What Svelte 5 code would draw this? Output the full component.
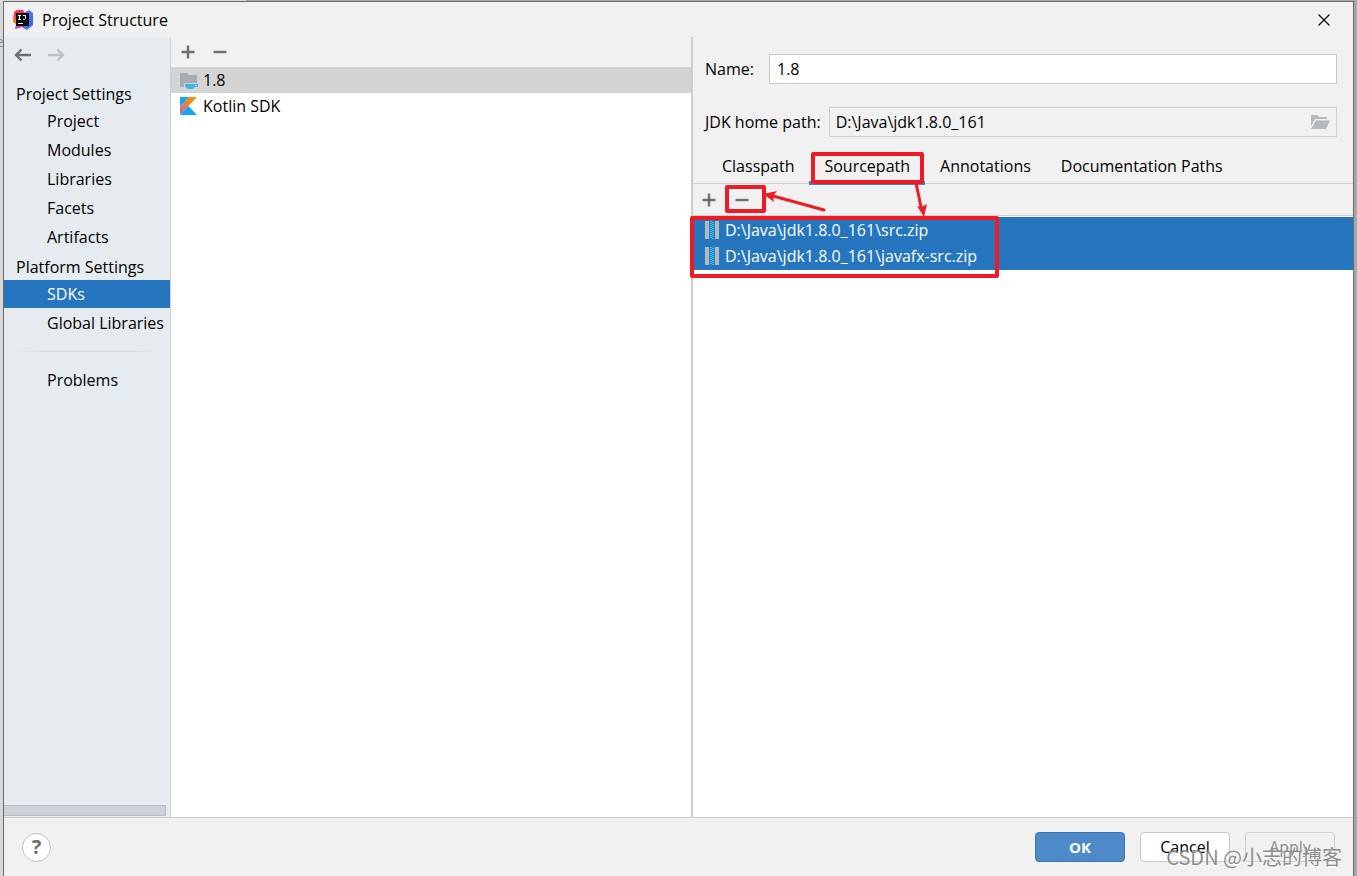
<script>
  const projectItems = ['Project', 'Modules', 'Libraries', 'Facets', 'Artifacts'];
  const platformItems = ['SDKs', 'Global Libraries'];
  const tabs = ['Classpath', 'Sourcepath', 'Annotations', 'Documentation Paths'];
  const sources = ['D:\\Java\\jdk1.8.0_161\\src.zip', 'D:\\Java\\jdk1.8.0_161\\javafx-src.zip'];
  const toothRows = [0, 1, 2, 3, 4, 5, 6, 7, 8];
  let section = $state('SDKs');
  let tab = $state('Sourcepath');
  let name = $state('1.8');
  let home = $state('D:\\Java\\jdk1.8.0_161');
</script>

{#snippet plus()}
  <svg width="14" height="14" viewBox="0 0 14 14" aria-hidden="true"><path d="M7 .5v13M.5 7h13" stroke="#6e6e6e" stroke-width="2.400" /></svg>
{/snippet}
{#snippet minus()}
  <svg width="14" height="14" viewBox="0 0 14 14" aria-hidden="true"><path d="M.5 7h13" stroke="#6e6e6e" stroke-width="2.400" /></svg>
{/snippet}

<div class="desktop">
  <span class="behind">e</span>
  <div class="window">
    <header class="titlebar">
      <svg width="22" height="22" viewBox="0 0 22 22" aria-hidden="true">
        <defs>
          <linearGradient id="warm" x1="0" y1="0" x2="0" y2="1"><stop offset="0" stop-color="#fe2857" /><stop offset=".35" stop-color="#fb3f52" /><stop offset=".6" stop-color="#fc801d" /><stop offset="1" stop-color="#b53bd6" /></linearGradient>
          <linearGradient id="cool" x1="0" y1="0" x2="1" y2="1"><stop offset="0" stop-color="#b74af7" /><stop offset=".5" stop-color="#4f78ee" /><stop offset="1" stop-color="#2d5ff0" /></linearGradient>
        </defs>
        <path d="M12 4 17 1 21 4 21 16 15 21 8 17Z" fill="url(#cool)" />
        <path d="M2 3 5 1 11 1 14 6 11 18 3 20 4 15 1 13Z" fill="url(#warm)" />
        <path d="M4 4h13v13H4z" fill="#0b0b0d" />
        <path d="M6 6.500h3M7.500 6.500v4M6 10.500h3M11 6.500h2.500v3l-1 1H11M6 14.500h5" fill="none" stroke="#fff" stroke-width="1" />
      </svg>
      <h1>Project Structure</h1>
      <button class="close" aria-label="Close">
        <svg width="14" height="14" viewBox="0 0 14 14"><path d="M1.500 1.500 12.500 12.500M12.500 1.500 1.500 12.500" stroke="#111" stroke-width="1.300" /></svg>
      </button>
    </header>

    <main>
      <nav class="sidebar">
        <div class="history">
          <button aria-label="Back"><svg width="18" height="14" viewBox="0 0 18 14"><path d="M17 7H2M7.500 1.500 2 7l5.500 5.500" fill="none" stroke="#6e6e6e" stroke-width="2.300" /></svg></button>
          <button aria-label="Forward" disabled><svg width="18" height="14" viewBox="0 0 18 14"><path d="M1 7h15M10.500 1.500 16 7l-5.500 5.500" fill="none" stroke="#bfc1c3" stroke-width="2.300" /></svg></button>
        </div>
        <h2>Project Settings</h2>
        {#each projectItems as item}
          <button class="entry" class:active={section === item} onclick={() => (section = item)}>{item}</button>
        {/each}
        <h2>Platform Settings</h2>
        {#each platformItems as item}
          <button class="entry" class:active={section === item} onclick={() => (section = item)}>{item}</button>
        {/each}
        <div class="rule"></div>
        <button class="entry" class:active={section === 'Problems'} onclick={() => (section = 'Problems')}>Problems</button>
        <div class="scrollbar"></div>
      </nav>

      <section class="sdks">
        <div class="tools">
          <button aria-label="Add SDK">{@render plus()}</button>
          <button aria-label="Remove SDK">{@render minus()}</button>
        </div>
        <ul>
          <li class="current">
            <svg width="20" height="20" viewBox="0 0 20 20" aria-hidden="true">
              <path d="M1 3h7l2 2h8v8H5v4H1z" fill="#a3adb4" />
              <path d="M6 14h13v3h-3l-2 2H9c-2-1-3-2-3-5zM16 15v1h2v-1z" fill="#40b6e0" fill-rule="evenodd" />
            </svg>
            <span>1.8</span>
          </li>
          <li>
            <svg width="20" height="20" viewBox="0 0 20 20" aria-hidden="true">
              <defs><linearGradient id="kotlin" x1="1" y1="0" x2="0" y2="1"><stop offset="0" stop-color="#ff8f00" /><stop offset=".4" stop-color="#f28522" /><stop offset="1" stop-color="#b866b8" /></linearGradient></defs>
              <path d="M1 1h9L1 11z" fill="#12a5fa" /><path d="M10 1h8L1 19v-8z" fill="url(#kotlin)" /><path d="M1 19 9.500 10 18 19z" fill="#12a5fa" />
            </svg>
            <span>Kotlin SDK</span>
          </li>
        </ul>
      </section>

      <section class="detail">
        <form>
          <div class="field"><label class="short" for="name">Name:</label><input id="name" bind:value={name} /></div>
          <div class="field">
            <label for="home">JDK home path:</label>
            <div class="path">
              <input id="home" bind:value={home} readonly />
              <button type="button" aria-label="Browse">
                <svg width="20" height="16" viewBox="0 0 20 16"><path d="M1 1h6l2 2h8v2H5l-4 7z" fill="#b4babe" /><path d="M6 6.500h14L16 15H1z" fill="#b4babe" /></svg>
              </button>
            </div>
          </div>
        </form>
        <div class="tabs" role="tablist">
          {#each tabs as t}
            <button role="tab" aria-selected={tab === t} onclick={() => (tab = t)}>{t}</button>
          {/each}
        </div>
        <div class="tools bordered">
          <button aria-label="Add path">{@render plus()}</button>
          <button aria-label="Remove path">{@render minus()}</button>
        </div>
        <ul class="sources">
          {#each sources as source}
            <li>
              <svg width="14" height="18" viewBox="0 0 14 18" aria-hidden="true">
                <path d="M0 0h4v18H0zM10 0h4v18h-4z" fill="#aeb9c0" />
                <path d="M5 0h4v18H5z" fill="#2389cc" />
                {#each toothRows as row}
                  <path d="M5 {row * 2}h2v1H5zM7 {row * 2 + 1}h2v1H7z" fill="#4fb4e4" />
                {/each}
              </svg>
              <span>{source}</span>
            </li>
          {/each}
        </ul>
        <svg class="marks" width="320" height="140" viewBox="0 0 320 140" aria-hidden="true">
          <g fill="none" stroke="#ed1c24" stroke-width="4" stroke-linejoin="round">
            <path d="M124 5h109v28H124z" /><path d="M38 38h37v24H38z" /><path d="M3 69h305v58H3z" />
            <path d="M135 61 84 47" stroke-width="3" stroke-linecap="round" /><path d="M227 34 232 58" stroke-width="3" />
          </g>
          <path d="M74 45 88 42 84 47 85 53ZM235 68 228 57 232 58 238 55Z" fill="#ed1c24" />
        </svg>
      </section>
    </main>

    <footer>
      <button class="help" aria-label="Help">?</button>
      <button class="action primary">OK</button>
      <button class="action">Cancel</button>
      <button class="action" disabled>Apply</button>
      <span class="watermark">CSDN @小志的博客</span>
    </footer>
  </div>
</div>

<style>
  :global(body) { margin: 0; }
  .desktop, .desktop * { box-sizing: border-box; }
  .desktop { position: relative; min-height: 100vh; display: flex; padding: 1px 3px 0; background: linear-gradient(90deg, #d8d8d8 246px, #a8a8a8 246px); font: 16px/24px "Open Sans", "Noto Sans CJK SC", sans-serif; color: #000; }
  .behind { position: absolute; left: -4px; top: 30px; color: #7890a8; font-size: 14px; }
  .window { position: relative; flex: 1; display: flex; flex-direction: column; min-width: 0; background: #f1f1f1; border: 1px solid #6a6a6a; border-bottom: 0; }
  button, input { font: inherit; color: inherit; }
  button { border: 0; padding: 0; background: none; }
  svg { display: block; flex: none; }
  h1, h2, ul { margin: 0; padding: 0; font-size: inherit; font-weight: 400; list-style: none; }
  .titlebar { height: 35px; display: flex; align-items: center; padding: 0 22px 0 8px; gap: 8px; }
  .close { margin-left: auto; }
  main { flex: 1; display: grid; grid-template-columns: 167px 520px minmax(0, 1fr); }
  .sidebar { display: flex; flex-direction: column; gap: 1px; background: #e6ebef; border-right: 1px solid #cdcfd1; }
  .history { height: 41px; display: flex; align-items: flex-start; gap: 15px; padding: 11px 10px 0; }
  .sidebar h2 { height: 27px; line-height: 30px; padding-left: 12px; }
  .entry { height: 28px; padding-left: 43px; text-align: left; white-space: nowrap; }
  .entry.active { background: #2675bf; color: #fff; }
  .rule { height: 27px; margin: 0 12px; background: linear-gradient(90deg, transparent, #d2d6d9 20%, #d2d6d9 80%, transparent) center / 100% 1px no-repeat; }
  .scrollbar { height: 11px; margin: auto 4px 1px 0; background: #cdd0d6; border: solid #b4bbc0; border-width: 1px 1px 1px 0; }
  .sdks { background: #fff; }
  .tools { height: 30px; display: flex; align-items: center; gap: 18px; padding: 0 10px; background: #f1f1f1; }
  .sdks li { height: 26px; display: flex; align-items: center; gap: 4px; padding-left: 8px; }
  .current { background: #d4d4d4; }
  .detail { position: relative; background: #fff; border-left: 2px solid #cdcdcd; display: flex; flex-direction: column; }
  form { background: #f1f1f1; padding: 17px 16px 12px 12px; display: flex; flex-direction: column; gap: 23px; }
  .field { display: flex; align-items: center; gap: 8px; }
  .short { width: 56px; }
  label { white-space: nowrap; }
  input { flex: 1; min-width: 0; height: 30px; padding: 0 7px; border: 1px solid #c8c8c8; background: #fff; outline: 0; }
  .path { flex: 1; display: flex; align-items: center; padding-right: 6px; border: 1px solid #cfcfcf; height: 30px; }
  .path input { border: 0; height: 28px; padding: 0 6px; background: none; }
  .tabs { position: relative; z-index: 1; display: flex; height: 35px; padding-left: 14px; background: #f1f1f1; border-bottom: 1px solid #cdcdcd; }
  .tabs button { padding: 2px 15px 0; height: 36px; border-bottom: 4px solid transparent; white-space: nowrap; }
  .tabs button[aria-selected='true'] { border-color: #4083c9; }
  .bordered { height: 32px; border-bottom: 1px solid #cdcdcd; padding: 0 9px; gap: 19px; }
  .sources { margin-top: 1px; padding-bottom: 1px; background: #2675bf; color: #fff; }
  .sources li { height: 26px; display: flex; align-items: center; gap: 6px; padding-left: 12px; }
  .marks { position: absolute; z-index: 2; left: -4px; top: 112px; pointer-events: none; }
  footer { position: relative; height: 59px; display: flex; align-items: center; gap: 15px; padding: 0 18px; border-top: 1px solid #cdcdcd; }
  .help { width: 29px; height: 29px; margin-right: auto; border: 1px solid #bfbfbf; border-radius: 50%; background: #fff; font: 700 20px/26px "Open Sans", sans-serif; color: #6e6e6e; }
  .action { width: 90px; height: 30px; border: 1px solid #c6c6c6; border-radius: 4px; background: #fff; }
  .action:disabled { background: none; color: #8c8c8c; border-color: #d0d0d0; }
  .primary { background: #4e8ac8; border-color: #3b76b5; color: #fff; font-size: 15px; font-weight: 700; }
  .watermark { position: absolute; right: 11px; bottom: 4px; font: 20px/30px "Noto Sans CJK SC", sans-serif; color: rgba(110, 110, 110, 0.8); text-shadow: 0 1px 1px #fff; pointer-events: none; white-space: nowrap; }
</style>
